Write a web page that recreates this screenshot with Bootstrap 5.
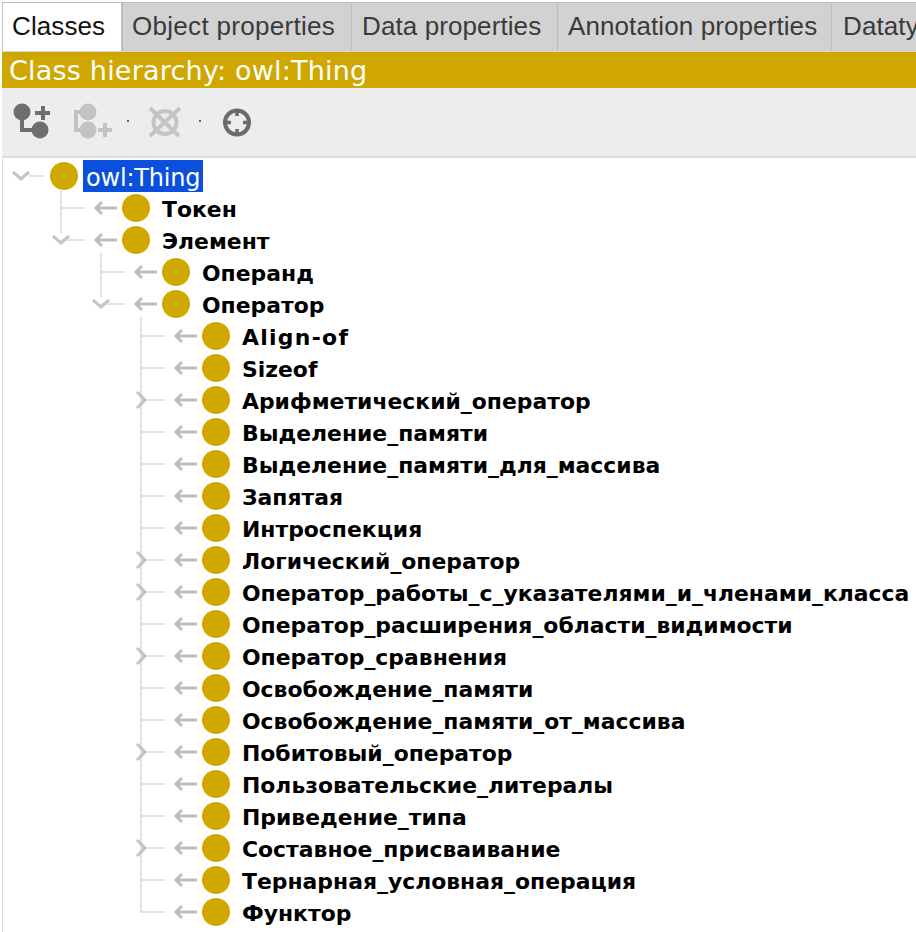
<!DOCTYPE html>
<html lang="ru"><head><meta charset="utf-8"><title>Class hierarchy</title>
<link href="https://cdn.jsdelivr.net/npm/bootstrap@5.3.0/dist/css/bootstrap.min.css" rel="stylesheet">
<style>
html,body{height:932px;overflow:hidden;background:#fff}
.shell{width:916px;height:932px;padding:2px 0 0 2px;overflow:hidden}
.tabbar{height:50px;background:#d2d2d2;border-top:1px solid #bcbcbc;border-bottom:1px solid #d8d8d8;border-left:1px solid #c4c4c4;flex-wrap:nowrap;overflow:hidden}
.tabbar .nav-link{height:48px;padding:0 0 0 10px;color:#3a3a3a;font:26px/47px "Liberation Sans",sans-serif;letter-spacing:.1px;white-space:nowrap;border-right:1px solid #bdbdbd;border-radius:0}
.tabbar .tab-on{background:#fff;color:#111;width:120px;padding-left:9px;border-right:2px solid #bdbdbd}
.tabbar .tab-b{width:229px;padding-left:9px;letter-spacing:.3px}
.tab-c{width:206px}.tab-d{width:274px}
.tabbar .tab-e{width:84px;padding-left:11px;border-right:0;overflow:hidden}
.headbar{height:36px;background:#cfa700;color:#fff;font:27px/38px "DejaVu Sans",sans-serif;letter-spacing:.2px;padding-left:7px;white-space:nowrap}
.toolbar{height:68px;background:#ededed}
.toolbar svg{display:block}
.treepane{height:776px;border-top:2px solid #dcdcdc;border-left:1px solid #dcdcdc;padding-top:2px;background:#fff}
.trow{height:32px;white-space:nowrap}
.trow svg{flex:none;overflow:visible}
.lvl0{padding-left:9px}.lvl1{padding-left:47px}.lvl2{padding-left:87px}.lvl3{padding-left:127px}
.lbl{font:700 21.9px/32px "DejaVu Sans",sans-serif;color:#000;margin-left:12px;padding-top:4px}
.lbl-wide{letter-spacing:1.3px}
.lbl-sel{font:24px/30px "DejaVu Sans",sans-serif;letter-spacing:-.2px;height:32px;padding:3px 3px 0;background:#0a50dc;color:#fff;margin-left:5px;flex:0 0 119px}
.sprites{position:absolute;width:0;height:0}
</style></head><body>
<svg class="sprites"><defs>
<g id="dot"><circle cx="14" cy="14" r="14" fill="#cfa700"/></g>
<g id="arr" fill="none" stroke="#bdbdbd" stroke-width="3"><path d="M46 16H67M52 10l-6 6 6 6"/></g>
<g id="h" stroke="#e2e2e2" stroke-width="2"><path d="M11 16H35"/></g>
<path id="vfull" d="M11-3V32" stroke="#e2e2e2" stroke-width="2"/>
<path id="vhalf" d="M11-3V9" stroke="#e2e2e2" stroke-width="2"/>
<path id="vlast" d="M11 0V17" stroke="#e2e2e2" stroke-width="2"/>
<path id="down" d="M3 12l8 7 8-7" fill="none" stroke="#c4c4c4" stroke-width="3"/>
<path id="right" d="M7 8l8 8-8 8" fill="none" stroke="#c4c4c4" stroke-width="3"/>
<g id="t"><use href="#vfull"/><use href="#h"/><use href="#arr"/></g>
<g id="tr"><use href="#vfull"/><use href="#h"/><use href="#right"/><use href="#arr"/></g>
<g id="td"><use href="#vhalf"/><use href="#h"/><use href="#down"/><use href="#arr"/></g>
<g id="tl"><use href="#vlast"/><use href="#h"/><use href="#arr"/></g>
</defs></svg>
<div class="shell d-flex flex-column">
<ul class="nav tabbar">
<li class="nav-item"><a class="nav-link tab-on" href="#">Classes</a></li>
<li class="nav-item"><a class="nav-link tab-b" href="#">Object properties</a></li>
<li class="nav-item"><a class="nav-link tab-c" href="#">Data properties</a></li>
<li class="nav-item"><a class="nav-link tab-d" href="#">Annotation properties</a></li>
<li class="nav-item"><a class="nav-link tab-e" href="#">Datatypes</a></li>
</ul>
<div class="headbar">Class hierarchy: owl:Thing</div>
<div class="toolbar">
<svg width="300" height="68" viewBox="2 88 300 68">
<g fill="#6f6f6f"><circle cx="22" cy="112" r="8.5"/><circle cx="40" cy="130" r="8.5"/><path d="M20 112h4v16h12v4H20zM41 106h4v5h5v4h-5v5h-4v-5h-6v-4h6z"/></g>
<g fill="#c2c2c2"><circle cx="88" cy="112" r="8.5"/><circle cx="88" cy="130" r="8.5"/><path d="M74 110h8v4h-4v14h4v4h-8zM103 123h4v5h5v4h-5v5h-4v-5h-5v-4h5z"/></g>
<rect x="127" y="120" width="2" height="2" fill="#666"/><rect x="199" y="120" width="2" height="2" fill="#666"/>
<g fill="none" stroke="#c4c4c4" stroke-width="4"><circle cx="165" cy="122.500" r="11.500"/><path d="M150 108l29 28M180 108l-30 28"/></g>
<g fill="none" stroke="#6b6b6b" stroke-width="4"><circle cx="237" cy="122.500" r="12"/><path d="M237 110v6M237 129v6M225 122.500h6M243 122.500h6" stroke-width="3.500"/></g>
</svg>
</div>
<div class="treepane">
<div class="trow d-flex align-items-center lvl0"><svg width="38" height="32"><use href="#down" x="-2"/><path d="M17 16H32" stroke="#e2e2e2" stroke-width="2"/></svg><svg width="28" height="28"><use href="#dot"/></svg><span class="lbl-sel">owl:Thing</span></div>
<div class="trow d-flex align-items-center lvl1"><svg width="72" height="32"><use href="#t"/></svg><svg width="28" height="28"><use href="#dot"/></svg><span class="lbl">Токен</span></div>
<div class="trow d-flex align-items-center lvl1"><svg width="72" height="32"><use href="#td"/></svg><svg width="28" height="28"><use href="#dot"/></svg><span class="lbl">Элемент</span></div>
<div class="trow d-flex align-items-center lvl2"><svg width="72" height="32"><use href="#t"/></svg><svg width="28" height="28"><use href="#dot"/></svg><span class="lbl">Операнд</span></div>
<div class="trow d-flex align-items-center lvl2"><svg width="72" height="32"><use href="#td"/></svg><svg width="28" height="28"><use href="#dot"/></svg><span class="lbl">Оператор</span></div>
<div class="trow d-flex align-items-center lvl3"><svg width="72" height="32"><use href="#t"/></svg><svg width="28" height="28"><use href="#dot"/></svg><span class="lbl lbl-wide">Align-of</span></div>
<div class="trow d-flex align-items-center lvl3"><svg width="72" height="32"><use href="#t"/></svg><svg width="28" height="28"><use href="#dot"/></svg><span class="lbl">Sizeof</span></div>
<div class="trow d-flex align-items-center lvl3"><svg width="72" height="32"><use href="#tr"/></svg><svg width="28" height="28"><use href="#dot"/></svg><span class="lbl">Арифметический_оператор</span></div>
<div class="trow d-flex align-items-center lvl3"><svg width="72" height="32"><use href="#t"/></svg><svg width="28" height="28"><use href="#dot"/></svg><span class="lbl">Выделение_памяти</span></div>
<div class="trow d-flex align-items-center lvl3"><svg width="72" height="32"><use href="#t"/></svg><svg width="28" height="28"><use href="#dot"/></svg><span class="lbl">Выделение_памяти_для_массива</span></div>
<div class="trow d-flex align-items-center lvl3"><svg width="72" height="32"><use href="#t"/></svg><svg width="28" height="28"><use href="#dot"/></svg><span class="lbl">Запятая</span></div>
<div class="trow d-flex align-items-center lvl3"><svg width="72" height="32"><use href="#t"/></svg><svg width="28" height="28"><use href="#dot"/></svg><span class="lbl">Интроспекция</span></div>
<div class="trow d-flex align-items-center lvl3"><svg width="72" height="32"><use href="#tr"/></svg><svg width="28" height="28"><use href="#dot"/></svg><span class="lbl">Логический_оператор</span></div>
<div class="trow d-flex align-items-center lvl3"><svg width="72" height="32"><use href="#tr"/></svg><svg width="28" height="28"><use href="#dot"/></svg><span class="lbl">Оператор_работы_с_указателями_и_членами_класса</span></div>
<div class="trow d-flex align-items-center lvl3"><svg width="72" height="32"><use href="#t"/></svg><svg width="28" height="28"><use href="#dot"/></svg><span class="lbl">Оператор_расширения_области_видимости</span></div>
<div class="trow d-flex align-items-center lvl3"><svg width="72" height="32"><use href="#tr"/></svg><svg width="28" height="28"><use href="#dot"/></svg><span class="lbl">Оператор_сравнения</span></div>
<div class="trow d-flex align-items-center lvl3"><svg width="72" height="32"><use href="#t"/></svg><svg width="28" height="28"><use href="#dot"/></svg><span class="lbl">Освобождение_памяти</span></div>
<div class="trow d-flex align-items-center lvl3"><svg width="72" height="32"><use href="#t"/></svg><svg width="28" height="28"><use href="#dot"/></svg><span class="lbl">Освобождение_памяти_от_массива</span></div>
<div class="trow d-flex align-items-center lvl3"><svg width="72" height="32"><use href="#tr"/></svg><svg width="28" height="28"><use href="#dot"/></svg><span class="lbl">Побитовый_оператор</span></div>
<div class="trow d-flex align-items-center lvl3"><svg width="72" height="32"><use href="#t"/></svg><svg width="28" height="28"><use href="#dot"/></svg><span class="lbl">Пользовательские_литералы</span></div>
<div class="trow d-flex align-items-center lvl3"><svg width="72" height="32"><use href="#t"/></svg><svg width="28" height="28"><use href="#dot"/></svg><span class="lbl">Приведение_типа</span></div>
<div class="trow d-flex align-items-center lvl3"><svg width="72" height="32"><use href="#tr"/></svg><svg width="28" height="28"><use href="#dot"/></svg><span class="lbl">Составное_присваивание</span></div>
<div class="trow d-flex align-items-center lvl3"><svg width="72" height="32"><use href="#t"/></svg><svg width="28" height="28"><use href="#dot"/></svg><span class="lbl">Тернарная_условная_операция</span></div>
<div class="trow d-flex align-items-center lvl3"><svg width="72" height="32"><use href="#tl"/></svg><svg width="28" height="28"><use href="#dot"/></svg><span class="lbl">Функтор</span></div>
</div>
</div>
<script src="https://cdn.jsdelivr.net/npm/bootstrap@5.3.0/dist/js/bootstrap.bundle.min.js"></script>
</body></html>
